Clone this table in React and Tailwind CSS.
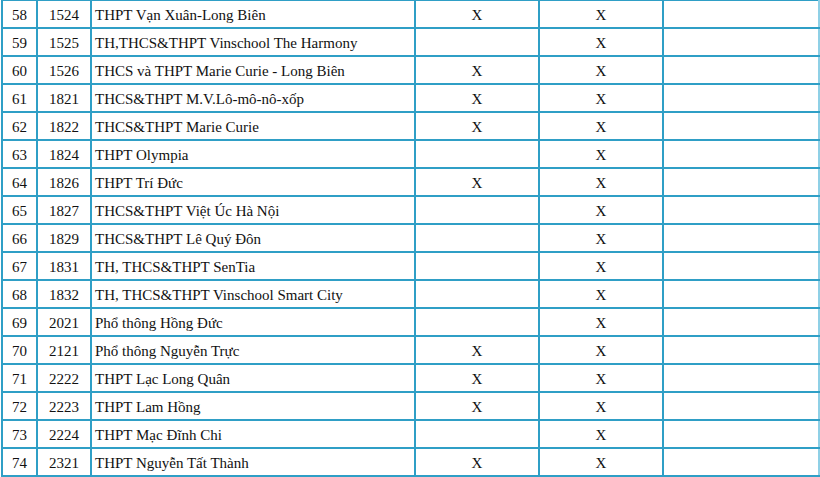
import React from 'react';

const rows = [
  [58, 1524, 'THPT Vạn Xuân-Long Biên', true, true],
  [59, 1525, 'TH,THCS&THPT Vinschool The Harmony', false, true],
  [60, 1526, 'THCS và THPT Marie Curie - Long Biên', true, true],
  [61, 1821, 'THCS&THPT M.V.Lô-mô-nô-xốp', true, true],
  [62, 1822, 'THCS&THPT Marie Curie', true, true],
  [63, 1824, 'THPT Olympia', false, true],
  [64, 1826, 'THPT Trí Đức', true, true],
  [65, 1827, 'THCS&THPT Việt Úc Hà Nội', false, true],
  [66, 1829, 'THCS&THPT Lê Quý Đôn', false, true],
  [67, 1831, 'TH, THCS&THPT SenTia', false, true],
  [68, 1832, 'TH, THCS&THPT Vinschool Smart City', false, true],
  [69, 2021, 'Phổ thông Hồng Đức', false, true],
  [70, 2121, 'Phổ thông Nguyễn Trực', true, true],
  [71, 2222, 'THPT Lạc Long Quân', true, true],
  [72, 2223, 'THPT Lam Hồng', true, true],
  [73, 2224, 'THPT Mạc Đĩnh Chi', false, true],
  [74, 2321, 'THPT Nguyễn Tất Thành', true, true],
];

export default function App() {
  const cell = "border-2 border-[#2f9fc6] h-[28px] p-0";

  return (
    <div className="w-[820px] h-[477px] bg-white overflow-hidden pl-[1px]" style={{ fontFamily: '"Liberation Serif", "Times New Roman", serif' }}>
      <table className="border-collapse text-[15px] text-[#111] leading-none -mt-[1px]">
        <colgroup>
          <col className="w-[35px]" />
          <col className="w-[54px]" />
          <col className="w-[324px]" />
          <col className="w-[124px]" />
          <col className="w-[124px]" />
          <col className="w-[156px]" />
        </colgroup>
        <tbody>
          {rows.map(([stt, code, name, a, b]) => (
            <tr key={stt}>
              <td className={`${cell} text-center pt-[2px]`}>{stt}</td>
              <td className={`${cell} text-center pt-[2px]`}>{code}</td>
              <td className={`${cell} pl-[3px] pt-[2px]`}>{name}</td>
              <td className={`${cell} text-center pt-[2px]`}>{a ? 'X' : ''}</td>
              <td className={`${cell} text-center pt-[2px]`}>{b ? 'X' : ''}</td>
              <td className={`${cell} border-r-[#8fd0e6]`}></td>
            </tr>
          ))}
        </tbody>
      </table>
    </div>
  );
}
